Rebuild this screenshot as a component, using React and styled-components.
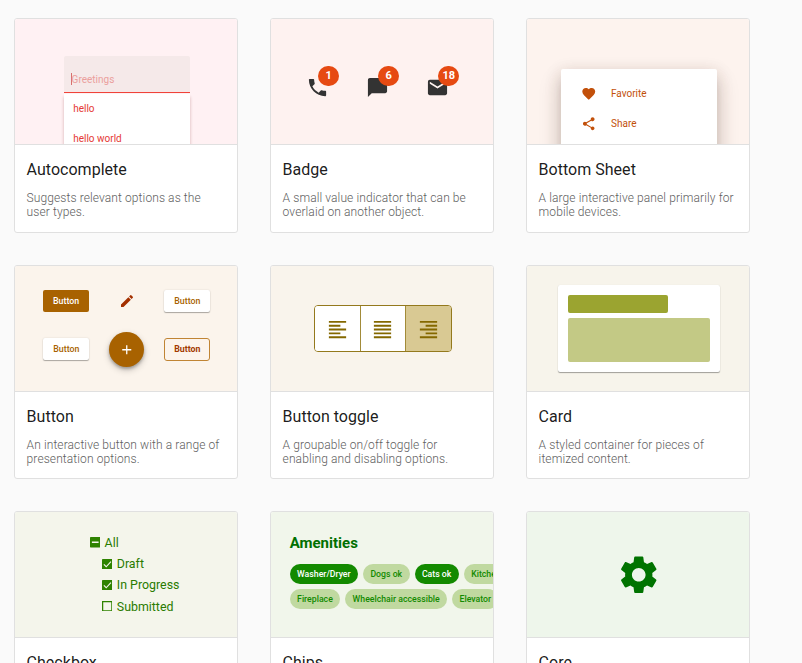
import React from "react";
import styled, { createGlobalStyle, css } from "styled-components";
import {
  MdPhone, MdChatBubble, MdMail, MdFavorite, MdShare, MdEdit, MdAdd,
  MdFormatAlignLeft, MdFormatAlignJustify, MdFormatAlignRight, MdSettings,
} from "react-icons/md";

const GlobalStyle = createGlobalStyle`
  *, *::before, *::after { box-sizing: border-box; }
  html, body { height: 663px; overflow: hidden; }
  body { margin: 0; background: #fafafa; font-family: Roboto, sans-serif; }
  svg { display: block; }
`;

const Gallery = styled.main`
  display: grid;
  grid-template-columns: repeat(3, 224px);
  grid-auto-rows: 214.4px;
  gap: 32px;
  padding: 18.2px 14px 0;
`;

const Tile = styled.article`
  border: 1px solid #e0e0e0;
  border-radius: 3px;
  background: #fff;
  overflow: hidden;
`;

const Preview = styled.div`
  display: flex;
  flex-direction: column;
  height: 126px;
  padding: ${(p) => p.$pad || "0"};
  background: ${(p) => p.$bg};
  border-bottom: 1px solid #e0e0e0;
  overflow: hidden;
`;

const Caption = styled.div`
  padding: 15px 12px 0 11.6px;
`;

const Title = styled.h2`
  margin: 0;
  font-size: 16px;
  line-height: 20px;
  font-weight: 450;
  letter-spacing: 0.02px;
  color: rgba(0, 0, 0, 0.9);
`;

const Summary = styled.p`
  margin: 11px 0 0;
  font-size: 12px;
  line-height: 14px;
  font-weight: 300;
  letter-spacing: 0.1px;
  color: #606060;
`;

/* Autocomplete */
const Field = styled.div`
  position: relative;
  z-index: 1;
  flex: none;
  width: 126.5px;
  height: 37px;
  padding: 17px 0 0 7px;
  border-bottom: 1px solid #f04339;
  border-radius: 2px 2px 0 0;
  background: #f5e9e9;
`;
const Placeholder = styled.div`
  height: 12px;
  border-left: 1px solid #d8706f;
  font-size: 10px;
  line-height: 14px;
  color: #eb9f9d;
`;
const OptionPanel = styled.div`
  flex: none;
  width: 126.5px;
  height: 70px;
  margin-top: 1px;
  padding-left: 9.6px;
  background: #fff;
  box-shadow: 0 3px 3px rgba(120, 30, 30, 0.3);
`;
const Option = styled.div`
  height: 30px;
  font-size: 10px;
  line-height: 29px;
  color: #e53935;
`;

/* Badge */
const BadgeRow = styled.div`
  display: flex;
  gap: 37px;
`;
const BadgedIcon = styled.div`
  position: relative;
  color: #333;
`;
const Count = styled.span`
  position: absolute;
  left: 12.7px;
  top: -10px;
  width: 20.5px;
  height: 20.5px;
  border-radius: 50%;
  background: #e64a12;
  color: #fff;
  font-size: 11px;
  line-height: 20px;
  font-weight: 700;
  text-align: center;
`;

/* Bottom sheet */
const Sheet = styled.div`
  flex: none;
  width: 156px;
  height: 110px;
  padding: 9.5px 20px;
  border-radius: 2px 2px 0 0;
  background: #fff;
  box-shadow: 0 8px 10px -5px rgba(70, 40, 30, 0.2), 0 12px 22px 2px rgba(70, 40, 30, 0.14), 0 4px 16px 1px rgba(70, 40, 30, 0.15);
`;
const SheetItem = styled.div`
  display: flex;
  align-items: center;
  gap: 14.5px;
  height: 30px;
  font-size: 10px;
  line-height: 12px;
  color: #c2500a;
`;

/* Button */
const ButtonGrid = styled.div`
  display: grid;
  grid-template-columns: 46px 36px 46px;
  grid-template-rows: 22px 35px;
  column-gap: 19.5px;
  row-gap: 20px;
  align-items: center;
  justify-items: center;
`;
const looks = {
  filled: css`width: 45.5px; justify-self: start; background: #a86200; color: #fff; box-shadow: none;`,
  raised: css`background: #fff; color: #a86200; box-shadow: 0 1px 1px rgba(0, 0, 0, 0.3), 0 0 2px rgba(0, 0, 0, 0.12);`,
  outlined: css`background: #fcf4ec; color: #a33a00; border: 1px solid #c08434; border-radius: 3px; font-weight: 700; justify-self: end;`,
};
const DemoButton = styled.button`
  display: flex;
  align-items: center;
  justify-content: center;
  width: 46px;
  height: ${(p) => (p.$look === "outlined" ? "23px" : "22px")};
  padding: 0;
  border: 0;
  border-radius: 2px;
  font: 500 8.8px Roboto, sans-serif;
  ${(p) => looks[p.$look]}
`;
const Fab = styled.button`
  display: grid;
  place-items: center;
  width: 35px;
  height: 35px;
  padding: 0;
  border: 0;
  border-radius: 50%;
  background: #a86200;
  color: #fff;
  box-shadow: 0 2px 3px rgba(0, 0, 0, 0.25), 0 3px 7px rgba(0, 0, 0, 0.2);
`;

/* Button toggle */
const ToggleGroup = styled.div`
  display: grid;
  grid-template-columns: 45px 45px 46px;
  width: 138px;
  height: 47px;
  border: 1px solid #94791d;
  border-radius: 4px;
  overflow: hidden;
`;
const Toggle = styled.div`
  display: grid;
  place-items: center;
  padding: 2px 1px 0 0;
  background: ${(p) => (p.$on ? "#d9c993" : "#fff")};
  color: #846800;
  & + & { border-left: 1px solid #a28b39; }
`;

/* Card */
const DemoCard = styled.div`
  width: 162px;
  height: 87.5px;
  padding: 10px;
  border-radius: 2px;
  background: #fff;
  box-shadow: 0 1px 1px rgba(0, 0, 0, 0.35), 0 0 1px rgba(0, 0, 0, 0.1);
`;
const Bar = styled.div`
  width: ${(p) => p.$w};
  height: ${(p) => p.$h};
  margin-bottom: 5px;
  border-radius: 2px;
  background: ${(p) => p.$c};
`;

/* Checkbox */
const CheckRow = styled.div`
  display: flex;
  align-items: center;
  gap: 4.5px;
  height: 21.2px;
  margin-left: ${(p) => (p.$nested ? "12.2px" : "0")};
  font-size: 12.4px;
  color: #2a7b00;
`;

/* Chips */
const ChipHeading = styled.h3`
  margin: 0 0 11px;
  font-size: 15px;
  line-height: 20px;
  font-weight: 700;
  color: #007000;
`;
const ChipRow = styled.div`
  display: flex;
  gap: 5px;
  margin-bottom: 5px;
`;
const Chip = styled.span`
  flex: none;
  height: 20px;
  padding: 0 7.4px;
  border-radius: 10px;
  background: ${(p) => (p.$on ? "#138a00" : "#c0d9a0")};
  color: ${(p) => (p.$on ? "#fff" : "#138a00")};
  font-size: 8.72px;
  line-height: 20px;
  font-weight: 500;
`;

const Centered = styled.div`
  display: grid;
  place-items: center;
  flex: 1;
  padding-left: 1px;
`;

function CheckGlyph({ state }) {
  return (
    <svg width="10.5" height="10.5" viewBox="0 0 10 10" fill="none">
      {state === "off" ? (
        <rect x="0.6" y="0.6" width="8.8" height="8.8" stroke="#2e8200" strokeWidth="1.2" />
      ) : (
        <rect width="10" height="10" rx="0.6" fill="#2e8200" />
      )}
      {state === "on" && <path d="M1.8 5.2 4 7.4 8.5 2.6" stroke="#f5f5eb" strokeWidth="1.1" />}
      {state === "mixed" && <path d="M1.8 5H8.2" stroke="#f5f5eb" strokeWidth="1.5" />}
    </svg>
  );
}

const items = [
  {
    title: "Autocomplete", text: "Suggests relevant options as the user types.",
    bg: "#fff1f3", pad: "36.8px 0 0 48.6px",
    art: (
      <>
        <Field><Placeholder>Greetings</Placeholder></Field>
        <OptionPanel><Option>hello</Option><Option>hello world</Option></OptionPanel>
      </>
    ),
  },
  {
    title: "Badge", text: "A small value indicator that can be overlaid on another object.",
    bg: "#fef2f0", pad: "56.5px 0 0 34.8px",
    art: (
      <BadgeRow>
        <BadgedIcon><MdPhone size={23} /><Count>1</Count></BadgedIcon>
        <BadgedIcon><MdChatBubble size={23} /><Count>6</Count></BadgedIcon>
        <BadgedIcon><MdMail size={23} /><Count>18</Count></BadgedIcon>
      </BadgeRow>
    ),
  },
  {
    title: "Bottom Sheet", text: "A large interactive panel primarily for mobile devices.",
    bg: "#fdf3ee", pad: "50px 0 0 34px",
    art: (
      <Sheet>
        <SheetItem><MdFavorite size={15.5} />Favorite</SheetItem>
        <SheetItem><MdShare size={15.5} />Share</SheetItem>
      </Sheet>
    ),
  },
  {
    title: "Button", text: "An interactive button with a range of presentation options.",
    bg: "#fbf4ec", pad: "24.4px 0 0 28.3px",
    art: (
      <ButtonGrid>
        <DemoButton $look="filled">Button</DemoButton>
        <MdEdit size={16} color="#a33000" />
        <DemoButton $look="raised">Button</DemoButton>
        <DemoButton $look="raised">Button</DemoButton>
        <Fab><MdAdd size={15.5} /></Fab>
        <DemoButton $look="outlined">Button</DemoButton>
      </ButtonGrid>
    ),
  },
  {
    title: "Button toggle", text: "A groupable on/off toggle for enabling and disabling options.",
    bg: "#f9f4ec", pad: "39.4px 0 0 43px",
    art: (
      <ToggleGroup>
        <Toggle><MdFormatAlignLeft size={23} /></Toggle>
        <Toggle><MdFormatAlignJustify size={23} /></Toggle>
        <Toggle $on><MdFormatAlignRight size={23} /></Toggle>
      </ToggleGroup>
    ),
  },
  {
    title: "Card", text: "A styled container for pieces of itemized content.",
    bg: "#f7f4eb", pad: "19.4px 0 0 31px",
    art: (
      <DemoCard>
        <Bar $w="100px" $h="18.5px" $c="#9ba430" />
        <Bar $w="142px" $h="43.5px" $c="#c3c985" />
      </DemoCard>
    ),
  },
  {
    title: "Checkbox", text: "Captures boolean input with an optional indeterminate mode.",
    bg: "#f4f5eb", pad: "20px 0 0 74.6px",
    art: (
      <>
        <CheckRow><CheckGlyph state="mixed" />All</CheckRow>
        <CheckRow $nested><CheckGlyph state="on" />Draft</CheckRow>
        <CheckRow $nested><CheckGlyph state="on" />In Progress</CheckRow>
        <CheckRow $nested><CheckGlyph state="off" />Submitted</CheckRow>
      </>
    ),
  },
  {
    title: "Chips", text: "Presents a list of items as a set of small, tactile entities.",
    bg: "#f1f6eb", pad: "21px 0 0 18.7px",
    art: (
      <>
        <ChipHeading>Amenities</ChipHeading>
        <ChipRow>
          <Chip $on>Washer/Dryer</Chip><Chip>Dogs ok</Chip><Chip $on>Cats ok</Chip><Chip>Kitchen</Chip>
        </ChipRow>
        <ChipRow>
          <Chip>Fireplace</Chip><Chip>Wheelchair accessible</Chip><Chip>Elevator</Chip>
        </ChipRow>
      </>
    ),
  },
  {
    title: "Core", text: "Reusable parts used by other components in the library.",
    bg: "#eef6eb",
    art: <Centered><MdSettings size={45.5} color="#007300" /></Centered>,
  },
];

export default function App() {
  return (
    <>
      <GlobalStyle />
      <Gallery>
        {items.map((it) => (
          <Tile key={it.title}>
            <Preview $bg={it.bg} $pad={it.pad}>{it.art}</Preview>
            <Caption>
              <Title>{it.title}</Title>
              <Summary>{it.text}</Summary>
            </Caption>
          </Tile>
        ))}
      </Gallery>
    </>
  );
}
